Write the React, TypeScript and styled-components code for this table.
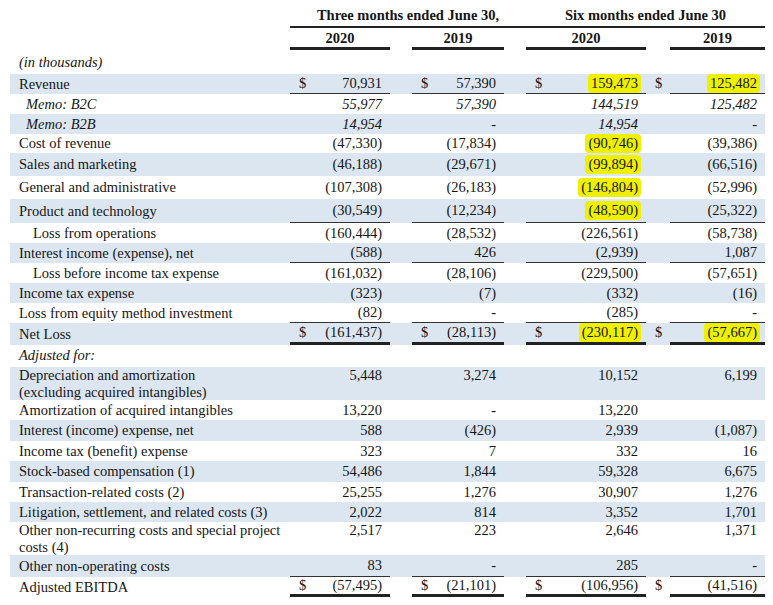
import styled, { createGlobalStyle } from 'styled-components';

type Line = 'single' | 'double';

interface RowData {
  label: string[];
  vals: string[];
  h: number;
  shade?: boolean;
  indent?: number;
  italic?: boolean;
  dollars?: boolean;
  line?: Line;
  hl?: boolean[];
}

const COLS = '280px 100px 22px 92px 22px 120px 24px 95px';

const rows: RowData[] = [
  { label: ['Revenue'], vals: ['70,931', '57,390', '159,473', '125,482'], h: 20, shade: true, dollars: true, line: 'single', hl: [false, false, true, true] },
  { label: ['Memo: B2C'], vals: ['55,977', '57,390', '144,519', '125,482'], h: 20, indent: 16, italic: true },
  { label: ['Memo: B2B'], vals: ['14,954', '-', '14,954', '-'], h: 20, shade: true, indent: 16, italic: true },
  { label: ['Cost of revenue'], vals: ['(47,330)', '(17,834)', '(90,746)', '(39,386)'], h: 18, hl: [false, false, true, false] },
  { label: ['Sales and marketing'], vals: ['(46,188)', '(29,671)', '(99,894)', '(66,516)'], h: 23, shade: true, hl: [false, false, true, false] },
  { label: ['General and administrative'], vals: ['(107,308)', '(26,183)', '(146,804)', '(52,996)'], h: 23, hl: [false, false, true, false] },
  { label: ['Product and technology'], vals: ['(30,549)', '(12,234)', '(48,590)', '(25,322)'], h: 24, shade: true, line: 'single', hl: [false, false, true, false] },
  { label: ['Loss from operations'], vals: ['(160,444)', '(28,532)', '(226,561)', '(58,738)'], h: 20, indent: 23 },
  { label: ['Interest income (expense), net'], vals: ['(588)', '426', '(2,939)', '1,087'], h: 20, shade: true, line: 'single' },
  { label: ['Loss before income tax expense'], vals: ['(161,032)', '(28,106)', '(229,500)', '(57,651)'], h: 20, indent: 23 },
  { label: ['Income tax expense'], vals: ['(323)', '(7)', '(332)', '(16)'], h: 20, shade: true },
  { label: ['Loss from equity method investment'], vals: ['(82)', '-', '(285)', '-'], h: 20, line: 'single' },
  { label: ['Net Loss'], vals: ['(161,437)', '(28,113)', '(230,117)', '(57,667)'], h: 21, shade: true, dollars: true, line: 'double', hl: [false, false, true, true] },
];

const adjusted: RowData[] = [
  { label: ['Depreciation and amortization', '(excluding acquired intangibles)'], vals: ['5,448', '3,274', '10,152', '6,199'], h: 33, shade: true },
  { label: ['Amortization of acquired intangibles'], vals: ['13,220', '-', '13,220', ''], h: 20 },
  { label: ['Interest (income) expense, net'], vals: ['588', '(426)', '2,939', '(1,087)'], h: 21, shade: true },
  { label: ['Income tax (benefit) expense'], vals: ['323', '7', '332', '16'], h: 20 },
  { label: ['Stock-based compensation (1)'], vals: ['54,486', '1,844', '59,328', '6,675'], h: 21, shade: true },
  { label: ['Transaction-related costs (2)'], vals: ['25,255', '1,276', '30,907', '1,276'], h: 20 },
  { label: ['Litigation, settlement, and related costs (3)'], vals: ['2,022', '814', '3,352', '1,701'], h: 20, shade: true },
  { label: ['Other non-recurring costs and special project', 'costs (4)'], vals: ['2,517', '223', '2,646', '1,371'], h: 33 },
  { label: ['Other non-operating costs'], vals: ['83', '-', '285', '-'], h: 22, shade: true, line: 'single' },
  { label: ['Adjusted EBITDA'], vals: ['(57,495)', '(21,101)', '(106,956)', '(41,516)'], h: 20, dollars: true, line: 'double' },
];

const lineWidth = (l?: Line) => (l === 'double' ? 3 : l === 'single' ? 1 : 0);

const GlobalStyle = createGlobalStyle`
  * { box-sizing: border-box; }
  body {
    margin: 0;
    background: #fff;
    color: #151515;
    font-family: "Liberation Serif", "Times New Roman", serif;
    font-size: 14.5px;
  }
`;

const Sheet = styled.div`
  width: 765px;
  padding-left: 10px;
`;

const GroupHead = styled.div`
  display: grid;
  grid-template-columns: 280px 236px 239px;
  height: 28px;
`;

const GroupTitle = styled.div`
  display: flex;
  align-items: flex-end;
  justify-content: center;
  padding-bottom: 2px;
  font-weight: bold;
  border-bottom: 2px solid #222;
`;

const YearRow = styled.div`
  display: grid;
  grid-template-columns: ${COLS};
  height: 21px;
`;

const Year = styled.div`
  display: flex;
  align-items: center;
  justify-content: center;
  font-weight: bold;
  border-bottom: 3px solid #222;
  padding-top: 2px;
`;

const Note = styled.div<{ $h: number }>`
  display: flex;
  align-items: flex-end;
  height: ${(p) => p.$h}px;
  padding: 0 0 3px 9px;
  font-style: italic;
`;

const Row = styled.div<{ $h: number; $shade?: boolean }>`
  display: grid;
  grid-template-columns: ${COLS};
  min-height: ${(p) => p.$h}px;
  background: ${(p) => (p.$shade ? '#dce6f1' : 'transparent')};
`;

const Label = styled.div<{ $indent: number; $italic?: boolean; $multi?: boolean }>`
  display: flex;
  flex-direction: column;
  justify-content: ${(p) => (p.$multi ? 'flex-start' : 'center')};
  padding-left: ${(p) => p.$indent}px;
  line-height: ${(p) => (p.$multi ? '16.5px' : '17px')};
  white-space: nowrap;
  font-style: ${(p) => (p.$italic ? 'italic' : 'normal')};
`;

const Value = styled.div<{ $line?: Line; $multi?: boolean; $italic?: boolean }>`
  display: flex;
  justify-content: space-between;
  align-items: ${(p) => (p.$multi ? 'flex-start' : 'center')};
  padding: 0 8px 0 9px;
  line-height: 17px;
  font-style: ${(p) => (p.$italic ? 'italic' : 'normal')};
  border-bottom: ${(p) => lineWidth(p.$line)}px solid ${(p) => (p.$line === 'double' ? '#222' : '#333')};
`;

const Gap = styled.div<{ $line?: Line }>`
  display: flex;
  align-items: center;
  padding-left: 9px;
  line-height: 17px;
  border-bottom: ${(p) => lineWidth(p.$line)}px solid transparent;
`;

const Mark = styled.span`
  background: #eef000;
  border-radius: 4px;
  padding: 1px 3px;
  margin: 0 -3px;
`;

function FinRow({ r }: { r: RowData }) {
  const multi = r.label.length > 1;
  const cell = (i: number, dollar: boolean) => (
    <Value $line={r.line} $multi={multi} $italic={r.italic}>
      <span>{dollar ? '$' : ''}</span>
      {r.hl && r.hl[i] ? <Mark>{r.vals[i]}</Mark> : <span>{r.vals[i]}</span>}
    </Value>
  );
  return (
    <Row $h={r.h} $shade={r.shade}>
      <Label $indent={r.indent ?? 9} $italic={r.italic} $multi={multi}>
        {r.label.map((l) => (
          <span key={l}>{l}</span>
        ))}
      </Label>
      {cell(0, !!r.dollars)}
      <Gap />
      {cell(1, !!r.dollars)}
      <Gap />
      {cell(2, !!r.dollars)}
      <Gap $line={r.line}>{r.dollars ? '$' : ''}</Gap>
      {cell(3, false)}
    </Row>
  );
}

export default function App() {
  return (
    <Sheet>
      <GlobalStyle />
      <GroupHead>
        <div />
        <GroupTitle>Three months ended June 30,</GroupTitle>
        <GroupTitle>Six months ended June 30</GroupTitle>
      </GroupHead>
      <YearRow>
        <div />
        <Year>2020</Year>
        <div />
        <Year>2019</Year>
        <div />
        <Year>2020</Year>
        <div />
        <Year>2019</Year>
      </YearRow>
      <Note $h={25}>(in thousands)</Note>
      {rows.map((r) => (
        <FinRow key={r.label[0]} r={r} />
      ))}
      <Note $h={22}>Adjusted for:</Note>
      {adjusted.map((r) => (
        <FinRow key={r.label[0]} r={r} />
      ))}
    </Sheet>
  );
}
